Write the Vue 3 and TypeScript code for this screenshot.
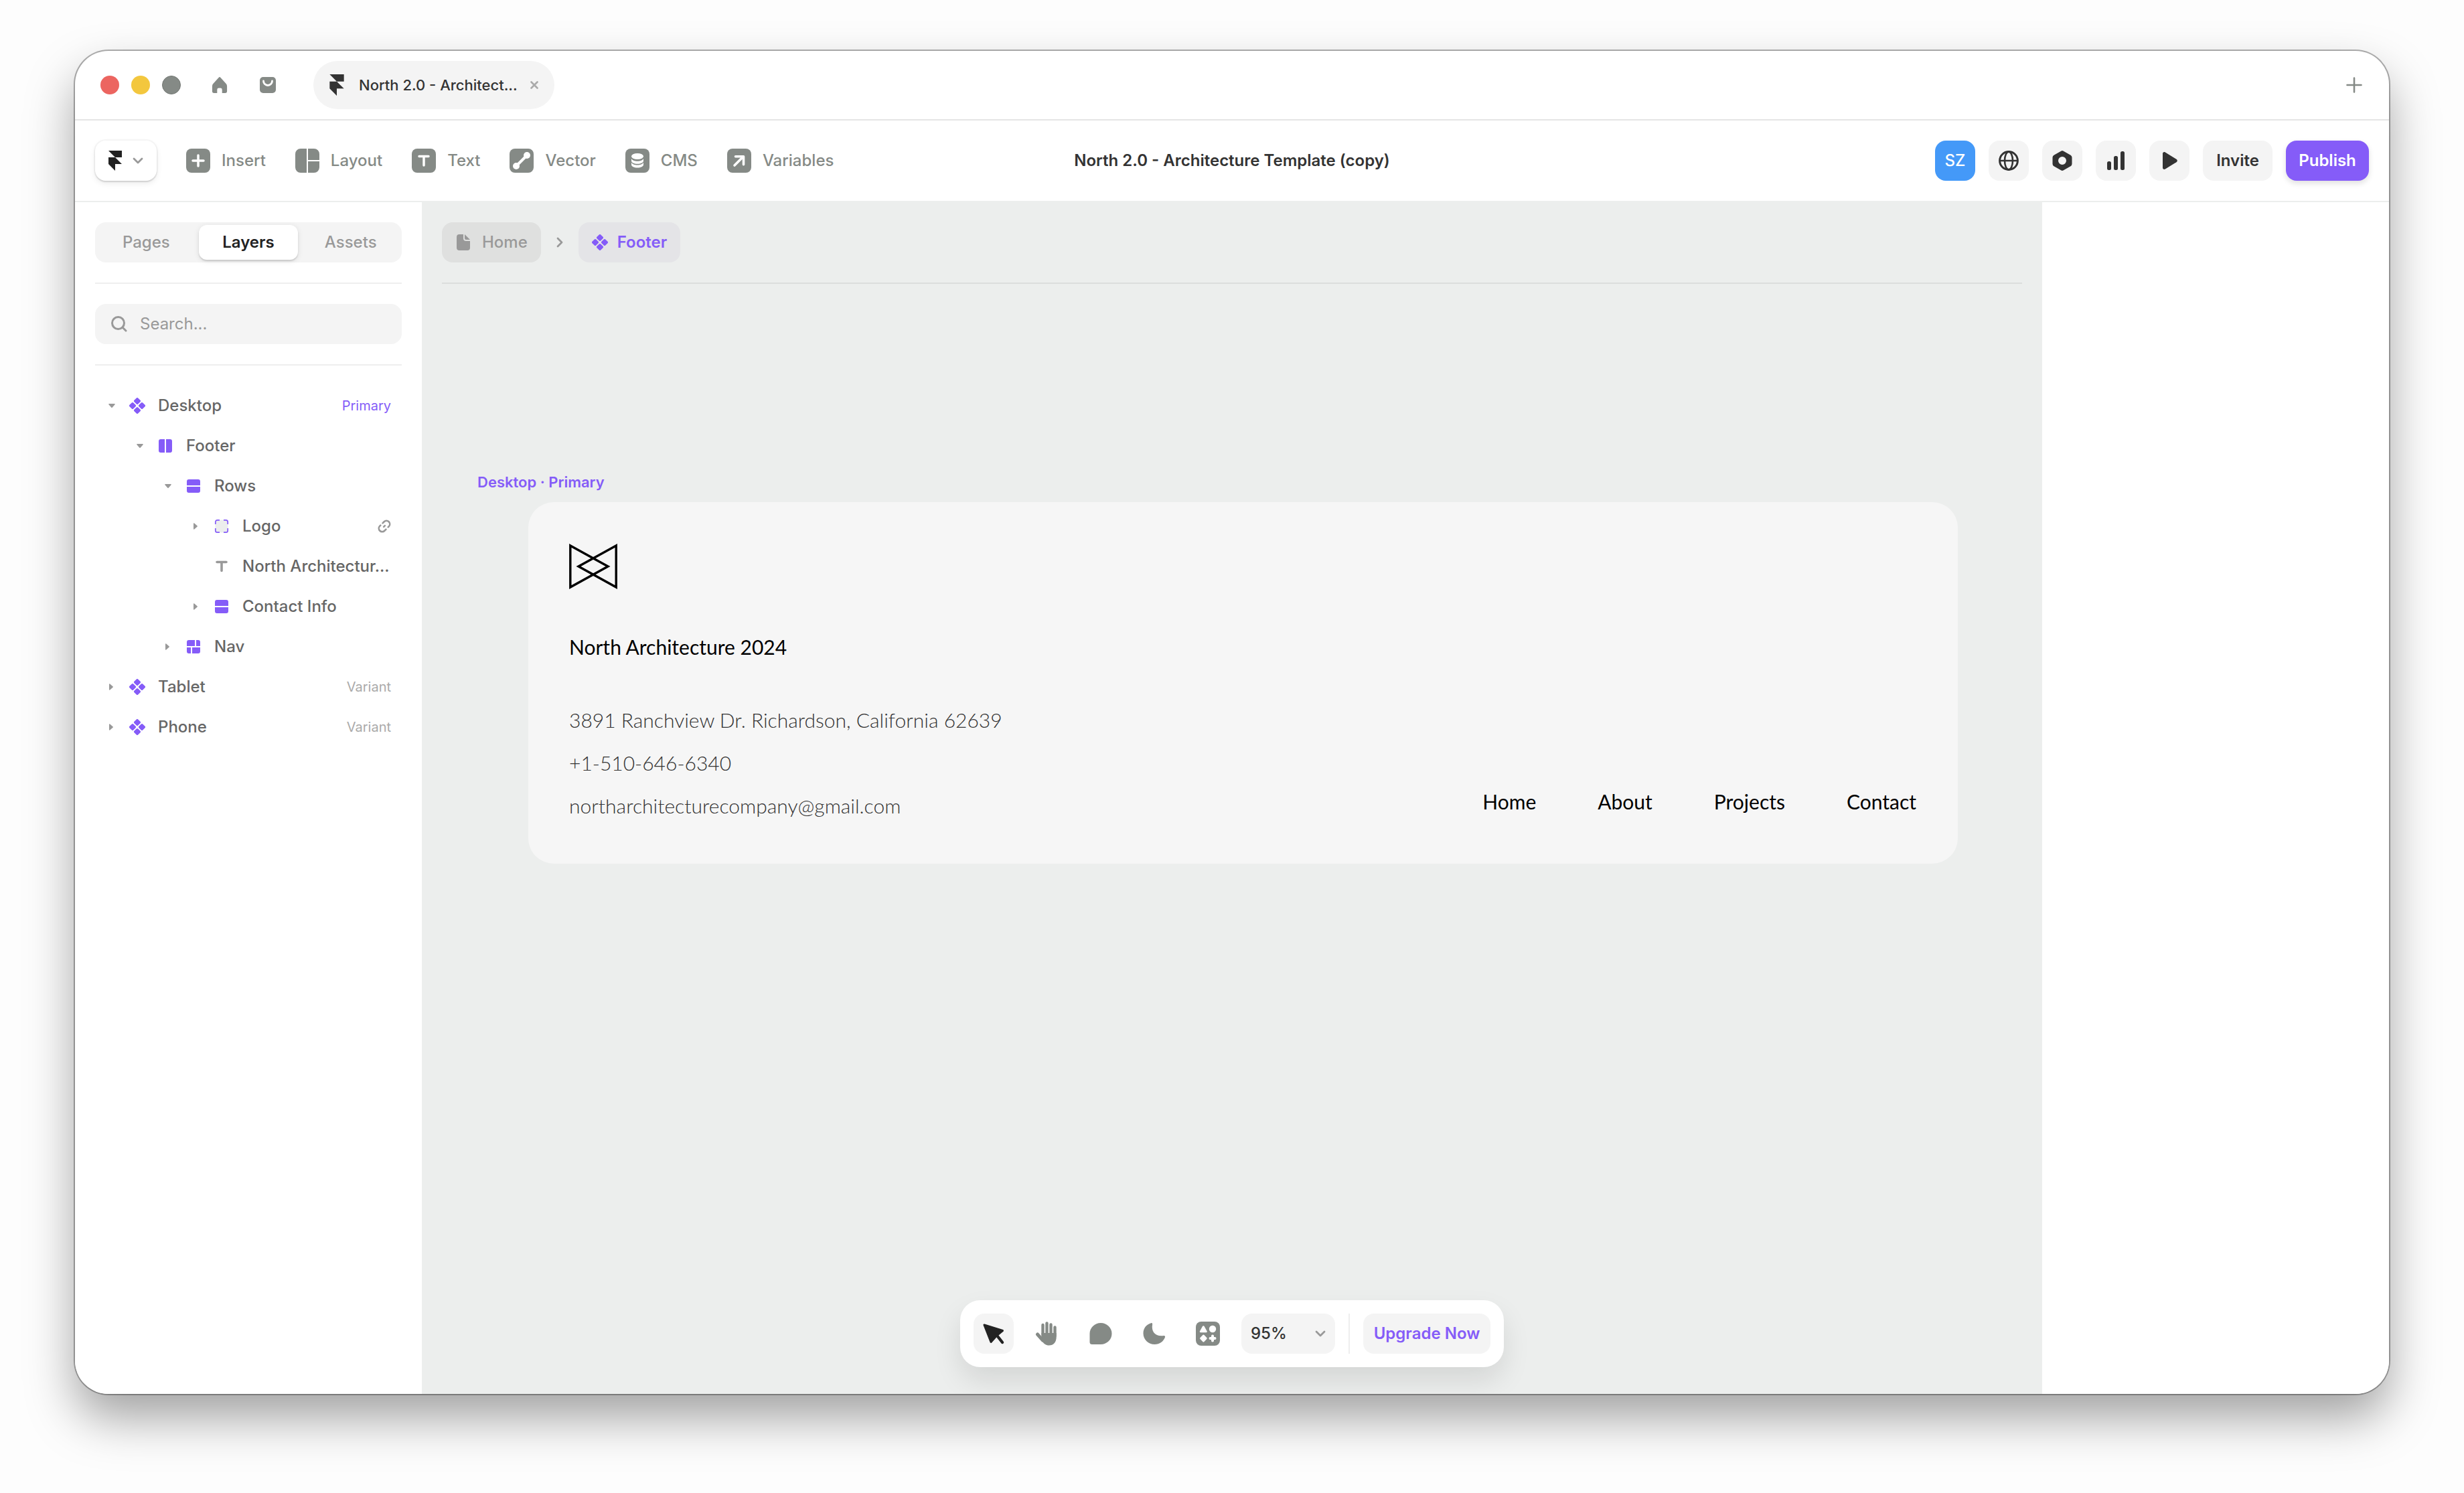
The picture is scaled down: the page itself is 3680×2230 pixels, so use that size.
<script setup lang="ts">
import { ref } from 'vue'

interface Tool {
  id: string
  label: string
}

interface Layer {
  name: string
  icon: string
  level: number
  state: 'open' | 'closed' | 'leaf'
  tag?: string
  linked?: boolean
}

const fileName = 'North 2.0 - Architecture Template (copy)'
const tabName = 'North 2.0 - Architect...'

const tools: Tool[] = [
  { id: 'insert', label: 'Insert' },
  { id: 'layout', label: 'Layout' },
  { id: 'text', label: 'Text' },
  { id: 'vector', label: 'Vector' },
  { id: 'cms', label: 'CMS' },
  { id: 'variables', label: 'Variables' },
]

const actions: Tool[] = [
  { id: 'globe', label: 'Localization' },
  { id: 'nut', label: 'Settings' },
  { id: 'bars', label: 'Analytics' },
  { id: 'play', label: 'Preview' },
]

const panels = ['Pages', 'Layers', 'Assets']
const activePanel = ref('Layers')
const query = ref('')

const layers: Layer[] = [
  { name: 'Desktop', icon: 'component', level: 0, state: 'open', tag: 'Primary' },
  { name: 'Footer', icon: 'columns', level: 1, state: 'open' },
  { name: 'Rows', icon: 'rows', level: 2, state: 'open' },
  { name: 'Logo', icon: 'frame', level: 3, state: 'closed', linked: true },
  { name: 'North Architectur...', icon: 'type', level: 3, state: 'leaf' },
  { name: 'Contact Info', icon: 'rows', level: 3, state: 'closed' },
  { name: 'Nav', icon: 'grid', level: 2, state: 'closed' },
  { name: 'Tablet', icon: 'component', level: 0, state: 'closed', tag: 'Variant' },
  { name: 'Phone', icon: 'component', level: 0, state: 'closed', tag: 'Variant' },
]

const modes: Tool[] = [
  { id: 'cursor', label: 'Select' },
  { id: 'hand', label: 'Pan' },
  { id: 'comment', label: 'Comment' },
  { id: 'moon', label: 'Dark mode' },
  { id: 'shapes', label: 'Actions' },
]
const activeMode = ref('cursor')
const zoom = ref('95%')

const contact = [
  '3891 Ranchview Dr. Richardson, California 62639',
  '+1-510-646-6340',
  'northarchitecturecompany@gmail.com',
]
const links = ['Home', 'About', 'Projects', 'Contact']
</script>

<template>
  <svg class="sprite" aria-hidden="true">
    <defs>
      <symbol id="framer" viewBox="0 0 16 24">
        <path d="M0 0h16v8H8zM0 8h8l8 8H0zM0 16h8v8z" />
      </symbol>
      <symbol id="component" viewBox="0 0 24 24">
        <g v-for="a in [0, 90, 180, 270]" :key="a" :transform="`rotate(${a} 12 12)`">
          <rect x="8" y="1" width="8" height="8" rx="1.6" transform="rotate(45 12 5)" />
        </g>
      </symbol>
      <symbol id="columns" viewBox="0 0 24 24">
        <path d="M5 2h6v20H5a3 3 0 0 1-3-3V5a3 3 0 0 1 3-3zM13 2h6a3 3 0 0 1 3 3v14a3 3 0 0 1-3 3h-6z" />
      </symbol>
      <symbol id="rows" viewBox="0 0 24 24">
        <path d="M2 11V5a3 3 0 0 1 3-3h14a3 3 0 0 1 3 3v6zM2 13h20v6a3 3 0 0 1-3 3H5a3 3 0 0 1-3-3z" />
      </symbol>
      <symbol id="grid" viewBox="0 0 24 24">
        <path d="M2 11V5a3 3 0 0 1 3-3h9v9zM16 2h3a3 3 0 0 1 3 3v6h-6zM2 13h6v9H5a3 3 0 0 1-3-3zM10 13h12v6a3 3 0 0 1-3 3h-9z" />
      </symbol>
      <symbol id="frame" viewBox="0 0 24 24">
        <rect x="2.500" y="2.500" width="19" height="19" rx="3" fill="#eceeed" />
        <path d="M9 2.800H5.500a2.700 2.700 0 0 0-2.700 2.700V9M15 2.800h3.500a2.700 2.700 0 0 1 2.700 2.700V9M9 21.200H5.500a2.700 2.700 0 0 1-2.700-2.700V15M15 21.200h3.500a2.700 2.700 0 0 0 2.700-2.700V15" fill="none" stroke="currentColor" stroke-width="1.700" />
      </symbol>
      <symbol id="type" viewBox="0 0 24 24">
        <path d="M5 5.500h14M12 5.500v13" fill="none" stroke="#999" stroke-width="3.600" stroke-linecap="round" />
      </symbol>
      <symbol id="link" viewBox="0 0 20 20">
        <g fill="none" stroke="currentColor" stroke-width="2.600" stroke-linecap="round" transform="rotate(-45 10 10)">
          <path d="M11.500 5h3a5 5 0 0 1 0 10h-1.500" />
          <path d="M8.500 15h-3a5 5 0 0 1 0-10H7" />
          <path d="M8.800 10h2.400" />
        </g>
      </symbol>
      <symbol id="chevron" viewBox="0 0 16 10">
        <path d="M2 2l6 6 6-6" fill="none" stroke="currentColor" stroke-width="2.800" stroke-linecap="round" stroke-linejoin="round" />
      </symbol>

      <symbol id="insert" viewBox="0 0 36 36">
        <rect width="36" height="36" rx="8" />
        <path d="M18 10v16M10 18h16" stroke="#fff" stroke-width="3.500" stroke-linecap="round" />
      </symbol>
      <symbol id="layout" viewBox="0 0 36 36">
        <path d="M8 0h9v36H8a8 8 0 0 1-8-8V8a8 8 0 0 1 8-8zM19 0h9a8 8 0 0 1 8 8v9H19zM19 19h17v9a8 8 0 0 1-8 8h-9z" />
      </symbol>
      <symbol id="text" viewBox="0 0 36 36">
        <rect width="36" height="36" rx="8" />
        <path d="M11 11.500h14M18 11.500V25" stroke="#fff" stroke-width="3.500" stroke-linecap="round" />
      </symbol>
      <symbol id="vector" viewBox="0 0 36 36">
        <rect width="36" height="36" rx="8" />
        <path d="M26 10L10 26" stroke="#fff" stroke-width="4" />
        <circle cx="26" cy="10" r="5" fill="#fff" />
        <circle cx="10" cy="26" r="5" fill="#fff" />
      </symbol>
      <symbol id="cms" viewBox="0 0 36 36">
        <rect width="36" height="36" rx="8" />
        <g fill="#fff">
          <ellipse cx="18" cy="11.500" rx="9" ry="4.600" />
          <path d="M9 14.800c1 2.600 4.800 4 9 4s8-1.400 9-4v3.400c0 2.600-4 4.600-9 4.600s-9-2-9-4.600z" />
          <path d="M9 20.600c1 2.600 4.800 4 9 4s8-1.400 9-4V24c0 2.600-4 4.600-9 4.600S9 26.600 9 24z" />
        </g>
      </symbol>
      <symbol id="variables" viewBox="0 0 36 36">
        <rect width="36" height="36" rx="8" />
        <path d="M12.500 11.700h12v12M24 12L11 25" fill="none" stroke="#fff" stroke-width="3.600" stroke-linecap="round" stroke-linejoin="round" />
      </symbol>

      <symbol id="globe" viewBox="0 0 32 32">
        <g fill="none" stroke="currentColor">
          <circle cx="16" cy="16" r="13.400" stroke-width="3" />
          <ellipse cx="16" cy="16" rx="6" ry="13.400" stroke-width="2.600" />
          <path d="M2.500 16h27" stroke-width="2.600" />
        </g>
      </symbol>
      <symbol id="nut" viewBox="0 0 32 32">
        <path fill-rule="evenodd" d="M14.500 1.500a3 3 0 0 1 3 0l11 6.200a4 4 0 0 1 2 3.500v9.600a4 4 0 0 1-2 3.500l-11 6.200a3 3 0 0 1-3 0l-11-6.200a4 4 0 0 1-2-3.500v-9.600a4 4 0 0 1 2-3.500zM16 10a6 6 0 1 0 0 12a6 6 0 0 0 0-12z" />
      </symbol>
      <symbol id="bars" viewBox="0 0 32 32">
        <rect x="3" y="17" width="6" height="13" rx="2.500" />
        <rect x="13" y="9" width="6" height="21" rx="2.500" />
        <rect x="23" y="2" width="6" height="28" rx="2.500" />
      </symbol>
      <symbol id="play" viewBox="0 0 32 32">
        <path d="M6 5.500C6 3.300 8 2.400 9.800 3.500l16.600 10.300c1.900 1.200 1.900 3.200 0 4.400L9.800 28.500C8 29.600 6 28.700 6 26.500z" />
      </symbol>

      <symbol id="cursor" viewBox="0 0 36 36">
        <path d="M4 5L31.500 13.500 23 20.500 14 30.500z" stroke="currentColor" stroke-width="3" stroke-linejoin="round" />
        <path d="M22 19.500l9 11.500" stroke="currentColor" stroke-width="4.400" stroke-linecap="round" />
      </symbol>
      <symbol id="hand" viewBox="0 0 36 36">
        <g fill="none" stroke="currentColor" stroke-linecap="round">
          <path d="M11.500 5v16M17.500 2.500v18M23.500 4.500v16M29.500 8.500v13" stroke-width="4.400" />
          <path d="M3.500 19l8 9" stroke-width="5" />
        </g>
        <path d="M9.300 17h22.400v6c0 8-4.500 12.500-11 12.500-5 0-7.700-2.500-10-6z" />
      </symbol>
      <symbol id="comment" viewBox="0 0 36 36">
        <path d="M1.500 18a16.500 16 0 1 1 16.500 16H5a3.500 3.500 0 0 1-3.500-3.500z" />
      </symbol>
      <symbol id="moon" viewBox="0 0 36 36">
        <path d="M13 2.200c1.600-.4 2.400.6 2.100 2-2 11 4.700 18.500 16.900 16.700 1.600-.2 2.500.9 2 2.400C31.800 29.600 25.800 34 18.500 34 9 34 1.500 26.800 1.500 17.500 1.500 10 6 4.200 13 2.200z" />
      </symbol>
      <symbol id="shapes" viewBox="0 0 36 36">
        <rect width="36" height="36" rx="8" />
        <g fill="#fff">
          <path d="M10 7a1.500 1.500 0 0 1 2.600 0l4 7.300a1.200 1.200 0 0 1-1 1.900H7a1.200 1.200 0 0 1-1-1.900z" />
          <circle cx="25" cy="11" r="5.200" />
          <rect x="7.200" y="20.800" width="8.400" height="8.400" rx="1.500" transform="rotate(45 11.400 25)" />
          <path d="M25 21.500v7M21.500 25h7" stroke="#fff" stroke-width="4" stroke-linecap="round" />
        </g>
      </symbol>
    </defs>
  </svg>

  <div class="desktop">
    <div class="window">
      <header class="titlebar">
        <div class="lights">
          <button class="light red" aria-label="Close window"></button>
          <button class="light yellow" aria-label="Minimise window"></button>
          <button class="light grey" aria-label="Zoom window"></button>
        </div>
        <button class="bare" aria-label="Home">
          <svg class="i24" viewBox="0 0 24 26">
            <path d="M10.400 1.200a2 2 0 0 1 3.200 0l8.600 9.400A6 6 0 0 1 24 15v8a3 3 0 0 1-3 3h-5v-5.500a2.500 2.500 0 0 0-2.500-2.500h-3A2.500 2.500 0 0 0 8 20.500V26H3a3 3 0 0 1-3-3v-8a6 6 0 0 1 1.800-4.400z" />
          </svg>
        </button>
        <button class="bare bag" aria-label="Marketplace">
          <svg class="i24" viewBox="0 0 24 24">
            <rect width="24" height="24" rx="5" />
            <path d="M5.500 6a6.500 6.500 0 0 0 13 0" fill="none" stroke="#fff" stroke-width="2.800" stroke-linecap="round" />
          </svg>
        </button>
        <div class="tab">
          <svg class="tab-logo"><use href="#framer" /></svg>
          <span class="tab-name">{{ tabName }}</span>
          <button class="bare tab-close" aria-label="Close tab">
            <svg class="i12" viewBox="0 0 12 12">
              <path d="M1.500 1.500l9 9M10.500 1.500l-9 9" stroke="currentColor" stroke-width="2.600" stroke-linecap="round" />
            </svg>
          </button>
        </div>
        <button class="bare new-tab" aria-label="New tab">
          <svg class="i24" viewBox="0 0 24 24">
            <path d="M12 1.500v21M1.500 12h21" stroke="currentColor" stroke-width="2.600" stroke-linecap="round" />
          </svg>
        </button>
      </header>

      <div class="toolbar">
        <div class="toolbar-left">
          <button class="menu" aria-label="Main menu">
            <svg class="menu-logo"><use href="#framer" /></svg>
            <svg class="chevron"><use href="#chevron" /></svg>
          </button>
          <nav class="tools">
            <button v-for="t in tools" :key="t.id" class="tool">
              <svg class="i36"><use :href="`#${t.id}`" /></svg>
              <span>{{ t.label }}</span>
            </button>
          </nav>
        </div>
        <h1 class="title">{{ fileName }}</h1>
        <div class="toolbar-right">
          <button class="square avatar">SZ</button>
          <button v-for="a in actions" :key="a.id" class="square" :aria-label="a.label">
            <svg class="i32"><use :href="`#${a.id}`" /></svg>
          </button>
          <button class="pill">Invite</button>
          <button class="pill publish">Publish</button>
        </div>
      </div>

      <div class="body">
        <aside class="sidebar">
          <div class="section">
            <div class="segments">
              <button
                v-for="p in panels"
                :key="p"
                class="segment"
                :class="{ active: p === activePanel }"
                @click="activePanel = p"
              >
                {{ p }}
              </button>
            </div>
          </div>
          <div class="section">
            <label class="search">
              <svg class="i24" viewBox="0 0 24 24">
                <g fill="none" stroke="currentColor" stroke-width="3" stroke-linecap="round">
                  <circle cx="10.500" cy="10.500" r="9" />
                  <path d="M17 17l5 5" />
                </g>
              </svg>
              <input v-model="query" type="text" placeholder="Search..." aria-label="Search layers" />
            </label>
          </div>
          <ul class="tree">
            <li
              v-for="l in layers"
              :key="l.name"
              class="row"
              :style="{ paddingLeft: `${15 + l.level * 42}px` }"
            >
              <svg class="caret" viewBox="0 0 20 20">
                <path v-if="l.state === 'open'" d="M6 7h8a.8.8 0 0 1 .6 1.200l-4 4.500a.8.8 0 0 1-1.200 0l-4-4.500A.8.8 0 0 1 6 7z" />
                <path v-else-if="l.state === 'closed'" d="M6 6a.8.8 0 0 1 1.200-.6l4.500 4a.8.8 0 0 1 0 1.200l-4.500 4A.8.8 0 0 1 6 14z" />
              </svg>
              <svg class="i24 layer-icon"><use :href="`#${l.icon}`" /></svg>
              <span class="layer-name">{{ l.name }}</span>
              <span v-if="l.tag" class="tag" :class="{ primary: l.tag === 'Primary' }">{{ l.tag }}</span>
              <svg v-if="l.linked" class="link-icon"><use href="#link" /></svg>
            </li>
          </ul>
        </aside>

        <main class="canvas">
          <div class="crumbs">
            <button class="crumb">
              <svg class="i24" viewBox="0 0 24 24">
                <path d="M6 0h6v6a4 4 0 0 0 4 4h6v10a4 4 0 0 1-4 4H6a4 4 0 0 1-4-4V4a4 4 0 0 1 4-4zM14 0l8 8h-6a2 2 0 0 1-2-2z" />
              </svg>
              Home
            </button>
            <svg class="crumb-arrow" viewBox="0 0 10 16">
              <path d="M2 2l6 6-6 6" fill="none" stroke="currentColor" stroke-width="2.800" stroke-linecap="round" stroke-linejoin="round" />
            </svg>
            <button class="crumb current">
              <svg class="i24"><use href="#component" /></svg>
              Footer
            </button>
          </div>

          <div class="artboard">
            <div class="artboard-label">Desktop · Primary</div>
            <footer class="card">
              <div class="card-info">
                <svg class="brand" viewBox="0 0 72 68">
                  <path d="M1.800 3L58 34 1.800 65zM70.200 3L14 34l56.200 31z" fill="none" stroke="#000" stroke-width="3.400" />
                </svg>
                <p class="brand-name">North Architecture 2024</p>
                <div class="contact">
                  <p v-for="c in contact" :key="c">{{ c }}</p>
                </div>
              </div>
              <nav class="card-nav">
                <a v-for="l in links" :key="l" href="#">{{ l }}</a>
              </nav>
            </footer>
          </div>
        </main>

        <aside class="inspector"></aside>
      </div>

      <div class="dock">
        <button
          v-for="m in modes"
          :key="m.id"
          class="mode"
          :class="{ active: m.id === activeMode }"
          :aria-label="m.label"
          @click="activeMode = m.id"
        >
          <svg class="i36"><use :href="`#${m.id}`" /></svg>
        </button>
        <div class="zoom">
          <select v-model="zoom" aria-label="Zoom level">
            <option>50%</option>
            <option>95%</option>
            <option>100%</option>
          </select>
          <svg class="chevron"><use href="#chevron" /></svg>
        </div>
        <span class="dock-line"></span>
        <button class="upgrade">Upgrade Now</button>
      </div>
    </div>
  </div>
</template>

<style>
body {
  margin: 0;
  background: #fdfdfd;
}
</style>

<style scoped>
* {
  box-sizing: border-box;
}

button,
input,
select {
  margin: 0;
  padding: 0;
  border: 0;
  outline: 0;
  background: none;
  color: inherit;
  font: inherit;
}

svg {
  display: block;
  flex: none;
  fill: currentColor;
}

p,
h1,
ul {
  margin: 0;
  padding: 0;
}

.sprite {
  position: absolute;
  width: 0;
  height: 0;
}

.i12 { width: 12px; height: 12px; }
.i24 { width: 24px; height: 24px; }
.i32 { width: 32px; height: 32px; }
.i36 { width: 36px; height: 36px; }

.desktop {
  display: flex;
  min-height: 100vh;
  padding: 76px 112px 148px;
  font: 500 24px/32px Inter, sans-serif;
  color: #333;
}

.window {
  position: relative;
  display: flex;
  flex: 1;
  flex-direction: column;
  min-width: 0;
  overflow: hidden;
  border-radius: 50px;
  background: #fff;
  box-shadow: 0 0 0 2px rgba(0, 0, 0, 0.3), 0 36px 72px rgba(0, 0, 0, 0.36);
}

/* Title bar */
.titlebar {
  display: flex;
  align-items: center;
  height: 104px;
  padding: 0 40px 0 38px;
  border-bottom: 2px solid #e5e5e5;
  color: #858a86;
}

.lights {
  display: flex;
  gap: 18px;
  margin-right: 46px;
}

.light {
  width: 28px;
  height: 28px;
  border-radius: 50%;
}

.red { background: #ec6560; }
.yellow { background: #f3c73e; }
.grey { background: #858a86; border: 1px solid #747874; }

.bag {
  margin-left: 48px;
}

.tab {
  display: flex;
  align-items: center;
  width: 360px;
  height: 72px;
  margin-left: 56px;
  padding: 0 24px;
  border-radius: 36px;
  background: #f4f4f4;
  color: #333;
  font-size: 22px;
}

.tab-logo {
  width: 22px;
  height: 32px;
  margin-right: 22px;
}

.tab-name {
  white-space: nowrap;
}

.tab-close {
  margin-left: auto;
  color: #aaa;
}

.new-tab {
  margin-left: auto;
}

/* Toolbar */
.toolbar {
  display: grid;
  grid-template-columns: 1fr auto 1fr;
  align-items: center;
  height: 122px;
  padding: 0 30px;
  border-bottom: 2px solid #eceeed;
}

.toolbar-left,
.toolbar-right,
.tools,
.tool {
  display: flex;
  align-items: center;
}

.toolbar-left {
  gap: 44px;
}

.menu {
  display: flex;
  align-items: center;
  gap: 16px;
  width: 92px;
  height: 60px;
  padding: 0 20px;
  border-radius: 16px;
  box-shadow: 0 0 0 2px rgba(0, 0, 0, 0.03), 0 2px 2px rgba(0, 0, 0, 0.1), 0 4px 10px rgba(0, 0, 0, 0.08);
  color: #222;
}

.menu-logo {
  width: 20px;
  height: 30px;
}

.chevron {
  width: 16px;
  height: 10px;
  color: #999;
}

.tools {
  gap: 44px;
}

.tool {
  gap: 17px;
  color: #858a86;
}

.title {
  font-size: 24px;
  font-weight: 600;
  line-height: 32px;
}

.toolbar-right {
  justify-content: flex-end;
  gap: 20px;
}

.square {
  display: flex;
  align-items: center;
  justify-content: center;
  width: 60px;
  height: 60px;
  border-radius: 16px;
  background: #f4f4f4;
}

.avatar {
  background: #4499f8;
  color: #fff;
}

.pill {
  width: 104px;
  height: 60px;
  border-radius: 16px;
  background: #f4f4f4;
  font-weight: 600;
}

.publish {
  width: 124px;
  background: #855cf8;
  box-shadow: 0 4px 8px rgba(0, 0, 0, 0.12);
  color: #fff;
}

/* Columns */
.body {
  display: flex;
  flex: 1;
}

.sidebar,
.inspector {
  flex: none;
  width: 518px;
  background: #fff;
}

.sidebar {
  padding: 0 30px;
}

.section {
  padding: 30px 0;
  border-bottom: 2px solid #eee;
}

.segments {
  display: flex;
  height: 60px;
  padding: 4px 0;
  border-radius: 16px;
  background: #f4f4f4;
}

.segment {
  flex: 1;
  margin: 0 2px;
  border-radius: 12px;
  color: #999;
}

.segment.active {
  background: #fff;
  box-shadow: 0 2px 2px rgba(0, 0, 0, 0.12), 0 2px 8px rgba(0, 0, 0, 0.1);
  color: #222;
  font-weight: 600;
}

.search {
  display: flex;
  align-items: center;
  gap: 19px;
  height: 60px;
  padding: 0 24px;
  border-radius: 16px;
  background: #f4f4f4;
  color: #999;
}

.search input {
  flex: 1;
  min-width: 0;
  font-weight: 400;
}

.search input::placeholder {
  color: #999;
  opacity: 1;
}

.tree {
  padding: 30px 0;
  list-style: none;
}

.row {
  display: flex;
  align-items: center;
  height: 60px;
  padding-right: 16px;
  color: #666;
}

.caret {
  width: 20px;
  height: 20px;
  margin-right: 16px;
  color: #999;
}

.layer-icon {
  margin-right: 19px;
  color: #855cf8;
}

.layer-name {
  flex: 1;
  white-space: nowrap;
}

.tag {
  color: #aaa;
  font-size: 20px;
  font-weight: 400;
}

.tag.primary {
  color: #855cf8;
}

.link-icon {
  width: 20px;
  height: 20px;
  color: #999;
}

/* Canvas */
.canvas {
  flex: 1;
  min-width: 0;
  padding: 0 30px;
  background: #eceeed;
}

.crumbs {
  display: flex;
  align-items: center;
  gap: 23px;
  padding: 30px 0;
  border-bottom: 2px solid #dcdedd;
  color: #999;
}

.crumb {
  display: flex;
  align-items: center;
  gap: 16px;
  height: 60px;
  padding: 0 20px;
  border-radius: 16px;
  background: #dfe0df;
}

.crumb.current {
  gap: 14px;
  background: #e4e4e7;
  color: #855cf8;
  font-weight: 600;
}

.crumb-arrow {
  width: 10px;
  height: 16px;
}

.artboard {
  padding: 282px 96px 0 53px;
}

.artboard-label {
  margin-bottom: 16px;
  color: #855cf8;
  font-size: 22px;
  font-weight: 600;
  line-height: 28px;
}

.card {
  display: flex;
  align-items: flex-end;
  justify-content: space-between;
  margin-left: 76px;
  padding: 62px 62px 69px 61px;
  border-radius: 38px;
  background: #f6f6f6;
  color: #000;
  font: 400 30px/36px Lato, sans-serif;
}

.brand {
  width: 72px;
  height: 68px;
}

.brand-name {
  margin: 68px 0 73px;
}

.contact {
  display: flex;
  flex-direction: column;
  gap: 28px;
  color: #333;
  font-weight: 300;
}

.card-nav {
  display: flex;
  gap: 92px;
  padding-bottom: 6px;
}

.card-nav a {
  color: inherit;
  text-decoration: none;
}

/* Floating dock */
.dock {
  position: absolute;
  bottom: 40px;
  left: 50%;
  display: flex;
  align-items: center;
  gap: 20px;
  height: 100px;
  padding: 0 20px;
  border-radius: 30px;
  background: #fff;
  box-shadow: 0 20px 40px rgba(0, 0, 0, 0.1);
  transform: translateX(-50%);
}

.mode {
  display: flex;
  align-items: center;
  justify-content: center;
  width: 60px;
  height: 60px;
  border-radius: 16px;
  color: #858a86;
}

.mode.active {
  background: #f4f4f4;
  color: #222;
}

.zoom {
  display: grid;
  align-items: center;
  width: 140px;
  height: 60px;
  border-radius: 16px;
  background: #f4f4f4;
}

.zoom > * {
  grid-area: 1 / 1;
}

.zoom select {
  width: 100%;
  height: 60px;
  padding-left: 14px;
  appearance: none;
}

.zoom .chevron {
  justify-self: end;
  margin-right: 14px;
  pointer-events: none;
}

.dock-line {
  width: 2px;
  height: 60px;
  background: #eee;
}

.upgrade {
  width: 190px;
  height: 60px;
  border-radius: 16px;
  background: #f4f4f4;
  color: #855cf8;
  font-weight: 600;
  white-space: nowrap;
}
</style>
